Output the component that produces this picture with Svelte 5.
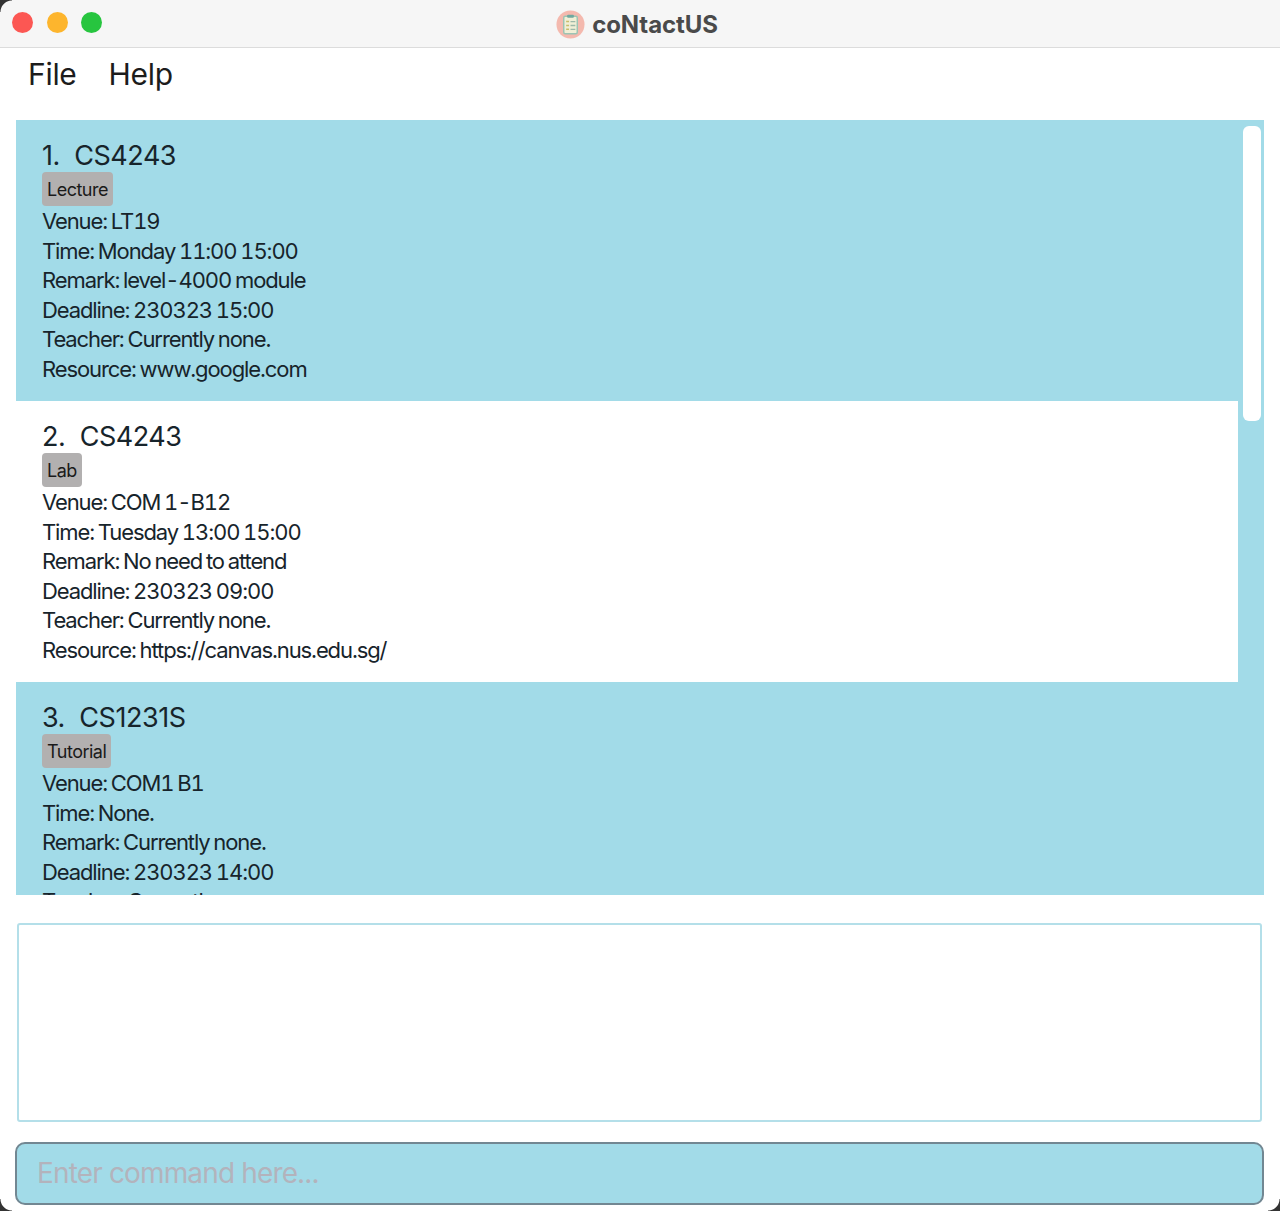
<script>
  const items = [
    { title: '1.  CS4243', tag: 'Lecture', venue: 'LT19', time: 'Monday 11:00 15:00', remark: 'level-4000 module', deadline: '230323 15:00', teacher: 'Currently none.', resource: 'www.google.com' },
    { title: '2.  CS4243', tag: 'Lab', venue: 'COM 1-B12', time: 'Tuesday 13:00 15:00', remark: 'No need to attend', deadline: '230323 09:00', teacher: 'Currently none.', resource: 'https://canvas.nus.edu.sg/' },
    { title: '3.  CS1231S', tag: 'Tutorial', venue: 'COM1 B1', time: 'None.', remark: 'Currently none.', deadline: '230323 14:00', teacher: 'Currently none.', resource: 'None.' }
  ];
</script>

<div class="window">
  <header class="titlebar">
    <div class="lights">
      <span class="light red"></span>
      <span class="light yellow"></span>
      <span class="light green"></span>
    </div>
    <div class="title">
      <svg viewBox="0 0 30 30" width="29" height="29" aria-hidden="true">
        <circle cx="15" cy="15" r="14.5" fill="#f4b9ae" />
        <rect x="8" y="6.5" width="14" height="18" rx="1.5" fill="#f1efd6" stroke="#9cc4b4" stroke-width="1.5" />
        <rect x="11.5" y="5" width="7" height="3" rx="1" fill="#6fa8a0" />
        <path d="M10.5 12h3M10.5 16h3M10.5 20h3" stroke="#c9bd6a" stroke-width="1.6" />
        <path d="M15 12h5M15 16h5M15 20h5" stroke="#9db8a8" stroke-width="1.4" />
      </svg>
      <span>coNtactUS</span>
    </div>
  </header>

  <nav class="menu">
    <span>File</span>
    <span>Help</span>
  </nav>

  <section class="list">
    {#each items as item, i}
      <article class="card" class:odd={i % 2 === 1}>
        <h2>{item.title}</h2>
        <span class="tag">{item.tag}</span>
        <p>Venue: {item.venue}</p>
        <p>Time: {item.time}</p>
        <p>Remark: {item.remark}</p>
        <p>Deadline: {item.deadline}</p>
        <p>Teacher: {item.teacher}</p>
        <p>Resource: {item.resource}</p>
      </article>
    {/each}
    <div class="thumb"></div>
  </section>

  <div class="result"></div>

  <div class="command">Enter command here...</div>

  <i class="corner tl"></i>
  <i class="corner bl"></i>
  <i class="corner br"></i>
</div>

<style>
  :global(body) {
    margin: 0;
    background: #fff;
  }
  .window {
    position: relative;
    width: 1280px;
    height: 1211px;
    overflow: hidden;
    background: #fff;
    font-family: Inter, "Liberation Sans", sans-serif;
    color: #17242b;
    display: flex;
    flex-direction: column;
  }
  .titlebar {
    position: relative;
    height: 47px;
    flex: none;
    background: #f6f6f6;
    border-bottom: 1px solid #dcdcdc;
    display: flex;
    align-items: center;
    justify-content: center;
  }
  .lights {
    position: absolute;
    left: 12px;
    top: 12px;
    display: flex;
    gap: 13.5px;
  }
  .light {
    width: 21px;
    height: 21px;
    border-radius: 50%;
  }
  .red { background: #fc5753; }
  .yellow { background: #fdb52d; }
  .green { background: #27c53f; }
  .title {
    display: flex;
    align-items: center;
    gap: 7px;
    font-size: 24px;
    font-weight: 700;
    letter-spacing: -0.1px;
    color: #4a4a4a;
    padding: 2px 6px 0 0;
  }
  .menu {
    height: 52px;
    flex: none;
    padding-left: 28px;
    display: flex;
    gap: 32px;
    align-items: center;
    font-size: 30px;
    letter-spacing: -0.3px;
    color: #1c1c1c;
  }
  .list {
    position: relative;
    flex: none;
    margin: 20px 16px 0;
    height: 775px;
    overflow: hidden;
    background: #a2dbe8;
  }
  .card {
    height: 281px;
    box-sizing: border-box;
    padding: 19px 26px 0;
    background: #a2dbe8;
  }
  .card.odd {
    background: #fff;
    margin-right: 26px;
  }
  h2 {
    margin: 0;
    font-size: 27px;
    font-weight: 400;
    line-height: 33px;
    letter-spacing: -0.45px;
    white-space: pre;
  }
  .tag {
    display: inline-block;
    height: 34px;
    line-height: 35px;
    padding: 0 5px;
    margin-bottom: 1px;
    border-radius: 4px;
    background: #b2b0b0;
    color: #1a1a1a;
    font-size: 18px;
    letter-spacing: -0.5px;
    vertical-align: top;
  }
  p {
    margin: 0;
    font-size: 22px;
    line-height: 29.5px;
    letter-spacing: -1.1px;
    word-spacing: -1px;
    font-variant-numeric: tabular-nums;
    white-space: nowrap;
  }
  .thumb {
    position: absolute;
    left: 1227px;
    top: 6px;
    width: 18px;
    height: 295px;
    border-radius: 6px;
    background: #fff;
  }
  .result {
    flex: none;
    box-sizing: border-box;
    margin: 28px 18px 0 17px;
    height: 199px;
    border: 2px solid #b4dfe9;
    border-radius: 3px;
    background: #fff;
  }
  .command {
    flex: none;
    box-sizing: border-box;
    margin: 20px 16px 0 15px;
    height: 63px;
    line-height: 59px;
    padding-left: 20px;
    background: #a2dbe8;
    border: 2px solid #728792;
    border-radius: 10px;
    font-size: 28px;
    letter-spacing: -0.85px;
    color: #b3b3bc;
  }
  .corner {
    position: absolute;
    width: 12px;
    height: 12px;
  }
  .tl { left: 0; top: 0; background: radial-gradient(circle at 12px 12px, transparent 11px, #333 12px); }
  .bl { left: 0; bottom: 0; background: radial-gradient(circle at 12px 0, transparent 11px, #333 12px); }
  .br { right: 0; bottom: 0; background: radial-gradient(circle at 0 0, transparent 11px, #333 12px); }
</style>
